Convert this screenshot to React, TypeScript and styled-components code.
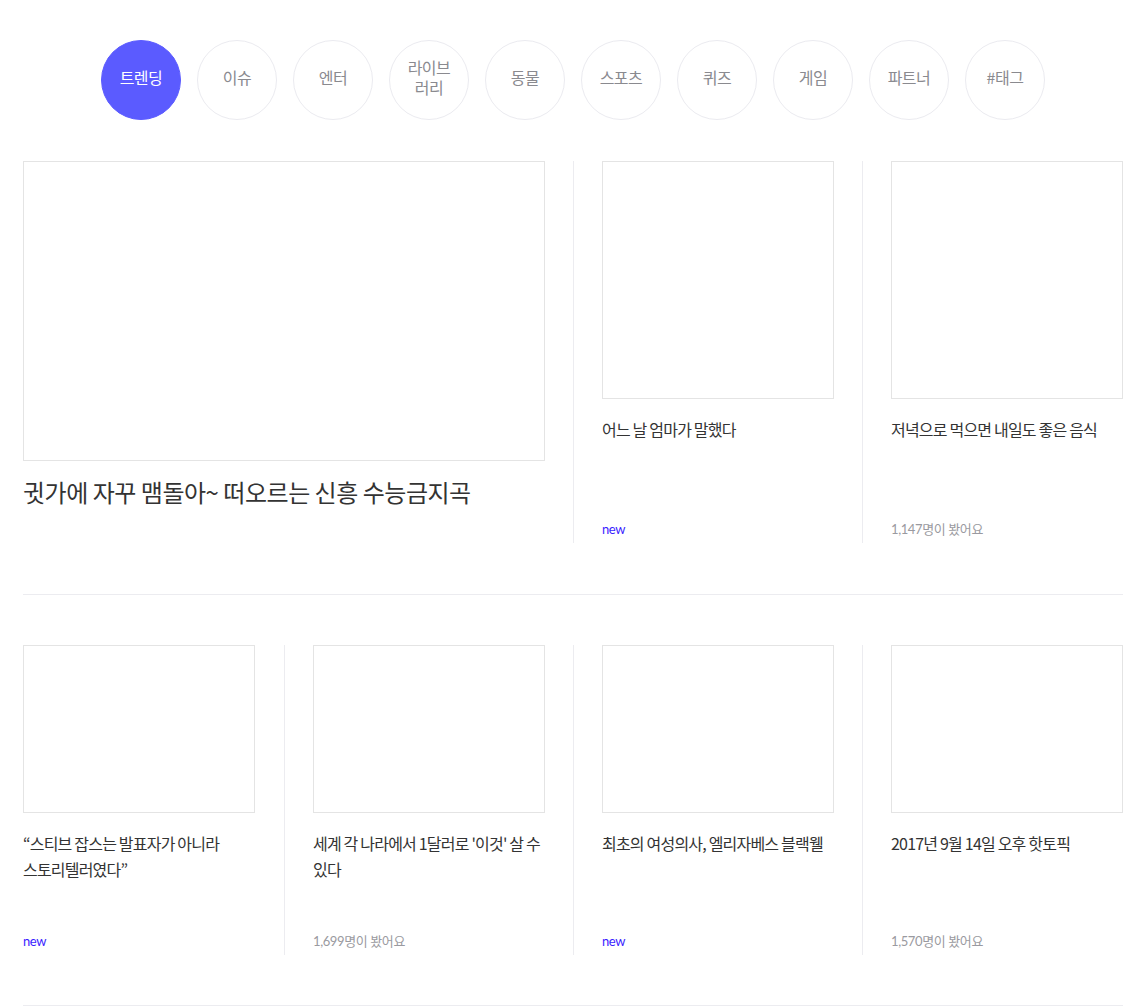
import styled, { createGlobalStyle } from 'styled-components';

const GlobalStyle = createGlobalStyle`
  html, body {
    margin: 0;
    padding: 0;
    background: #fff;
  }
  body {
    font-family: 'Lato', 'Noto Sans CJK KR', sans-serif;
    color: #333;
  }
`;

const Page = styled.main`
  box-sizing: border-box;
  width: 1100px;
  margin: 0 auto;
  padding: 40px 0 0;
  transform: translateX(3px);
`;

const CategoryList = styled.nav`
  display: flex;
  justify-content: center;
  gap: 16px;
  margin-bottom: 41px;
`;

const CategoryButton = styled.button<{ $active?: boolean }>`
  box-sizing: border-box;
  display: flex;
  align-items: center;
  justify-content: center;
  width: 80px;
  height: 80px;
  padding: 0 12px 6px;
  border-radius: 50%;
  border: 1px solid ${({ $active }) => ($active ? '#5b5bff' : '#ebebf0')};
  background: ${({ $active }) => ($active ? '#5b5bff' : '#fff')};
  color: ${({ $active }) => ($active ? '#fff' : '#8a8a8f')};
  font-family: 'Noto Sans CJK KR', sans-serif;
  font-size: 16px;
  font-weight: 400;
  line-height: 20px;
  letter-spacing: -0.03em;
  text-align: center;
  word-break: keep-all;
  cursor: pointer;
`;

const Section = styled.section<{ $last?: boolean }>`
  display: flex;
  padding-bottom: ${({ $last }) => ($last ? '50px' : '51px')};
  border-bottom: 1px solid #ececf0;
  margin-bottom: ${({ $last }) => ($last ? '0' : '50px')};
`;

const Cell = styled.article<{ $first?: boolean; $wide?: boolean }>`
  display: flex;
  flex-direction: column;
  width: ${({ $wide }) => ($wide ? '522px' : '232px')};
  flex: none;
  ${({ $first, $wide }) =>
    $first
      ? $wide
        ? ''
        : 'padding-right: 1px;'
      : `
    margin-left: 28px;
    padding-left: 28px;
    border-left: 1px solid #ececf0;
  `}
`;

const Thumb = styled.div<{ $height: number }>`
  box-sizing: border-box;
  width: 100%;
  height: ${({ $height }) => $height}px;
  border: 1px solid #e4e4e4;
  background: #fff;
`;

const Body = styled.div<{ $height: number }>`
  display: flex;
  flex-direction: column;
  height: ${({ $height }) => $height}px;
`;

const Title = styled.h3`
  margin: 17px 0 0;
  font-family: 'Noto Sans CJK KR', sans-serif;
  font-size: 16px;
  font-weight: 400;
  line-height: 26px;
  letter-spacing: -0.05em;
  color: #333;
  word-break: keep-all;
`;

const BigTitle = styled.h2`
  margin: 15px 0 0;
  font-family: 'Noto Sans CJK KR', sans-serif;
  font-size: 24px;
  font-weight: 400;
  line-height: 32px;
  letter-spacing: -0.02em;
  color: #333;
`;

const Meta = styled.span<{ $isNew?: boolean }>`
  margin-top: auto;
  padding-bottom: 4px;
  font-family: 'Lato', 'Noto Sans CJK KR', sans-serif;
  font-size: 13px;
  line-height: 20px;
  letter-spacing: -0.03em;
  color: ${({ $isNew }) => ($isNew ? '#3a1dff' : '#9a9aa0')};
`;

const categories = ['트렌딩', '이슈', '엔터', '라이브 러리', '동물', '스포츠', '퀴즈', '게임', '파트너', '#태그'];

type Post = { title: string; meta: string };

const topPosts: Post[] = [
  { title: '어느 날 엄마가 말했다', meta: 'new' },
  { title: '저녁으로 먹으면 내일도 좋은 음식', meta: '1,147명이 봤어요' },
];

const bottomPosts: Post[] = [
  { title: '“스티브 잡스는 발표자가 아니라 스토리텔러였다”', meta: 'new' },
  { title: "세계 각 나라에서 1달러로 '이것' 살 수 있다", meta: '1,699명이 봤어요' },
  { title: '최초의 여성의사, 엘리자베스 블랙웰', meta: 'new' },
  { title: '2017년 9월 14일 오후 핫토픽', meta: '1,570명이 봤어요' },
];

type CardProps = { post: Post; first?: boolean; thumbHeight: number; bodyHeight: number };

const Card = ({ post, first, thumbHeight, bodyHeight }: CardProps) => (
  <Cell $first={first}>
    <Thumb $height={thumbHeight} />
    <Body $height={bodyHeight}>
      <Title>{post.title}</Title>
      <Meta $isNew={post.meta === 'new'}>{post.meta}</Meta>
    </Body>
  </Cell>
);

const App = () => (
  <>
    <GlobalStyle />
    <Page>
      <CategoryList>
        {categories.map((name, i) => (
          <CategoryButton key={name} $active={i === 0}>
            {name}
          </CategoryButton>
        ))}
      </CategoryList>

      <Section>
        <Cell $first $wide>
          <Thumb $height={300} />
          <BigTitle>귓가에 자꾸 맴돌아~ 떠오르는 신흥 수능금지곡</BigTitle>
        </Cell>
        {topPosts.map((post) => (
          <Card key={post.title} post={post} thumbHeight={238} bodyHeight={144} />
        ))}
      </Section>

      <Section $last>
        {bottomPosts.map((post, i) => (
          <Card key={post.title} post={post} first={i === 0} thumbHeight={168} bodyHeight={142} />
        ))}
      </Section>
    </Page>
  </>
);

export default App;
